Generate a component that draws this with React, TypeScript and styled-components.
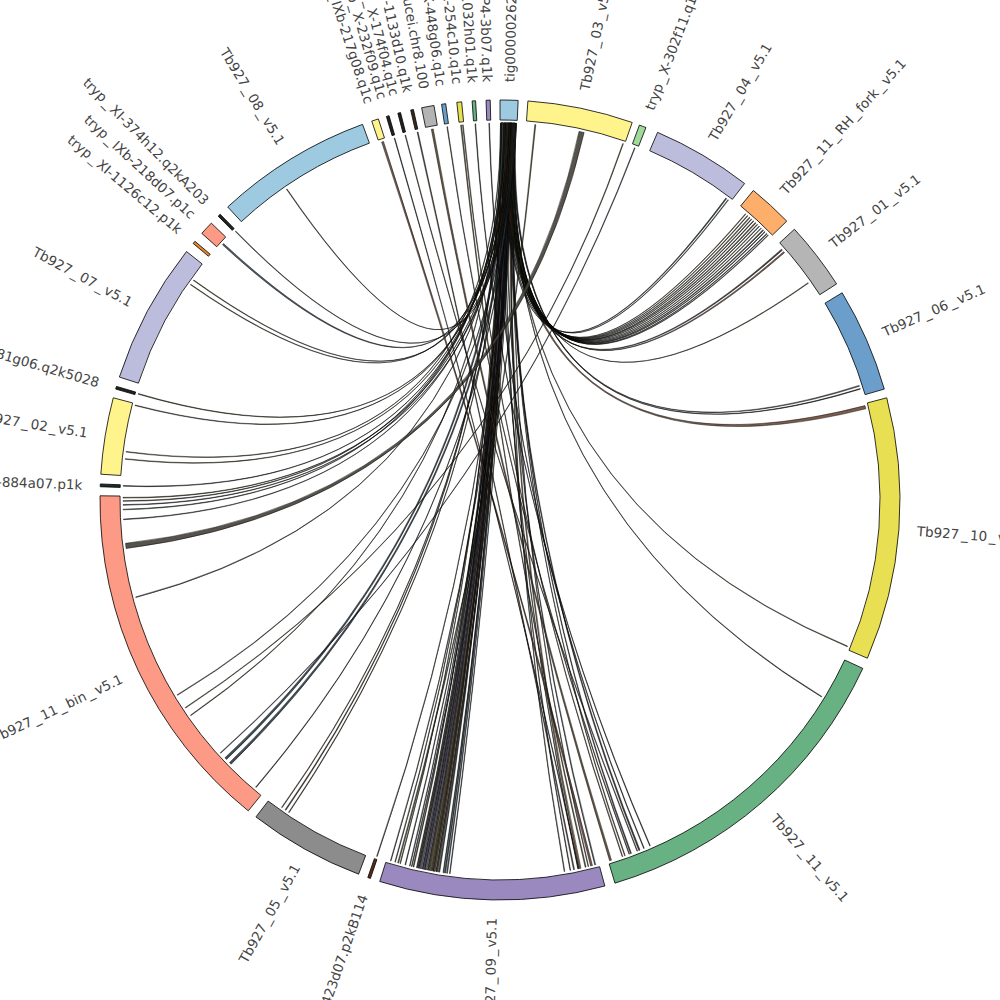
import React from 'react'
import styled, { createGlobalStyle } from 'styled-components'

const GlobalStyle = createGlobalStyle`
  html, body {
    margin: 0;
    padding: 0;
    background: #ffffff;
  }
  body {
    font-family: 'DejaVu Sans', 'Liberation Sans', sans-serif;
  }
`

const Page = styled.div`
  width: 1000px;
  height: 1000px;
  background: #ffffff;
  overflow: hidden;
`

const Plot = styled.svg`
  display: block;
  width: 1000px;
  height: 1000px;
`

const Ideogram = styled.path<{ $fill: string }>`
  fill: ${(p) => p.$fill};
  stroke: #000;
  stroke-width: 0.8;
`

const Ribbon = styled.path<{ $fill: string }>`
  fill: ${(p) => p.$fill};
  fill-opacity: 0.9;
  stroke: #000;
  stroke-width: 0.45;
`

const Label = styled.text`
  font-family: 'DejaVu Sans', 'Liberation Sans', sans-serif;
  font-size: 13.5px;
  fill: #444444;
  dominant-baseline: central;
`

const CX = 500
const CY = 500
const R_OUT = 400
const R_IN = 380
const R_LINK = 377
const R_LABEL = 418

interface Segment {
  name: string
  start: number
  end: number
  color: string
}

const SEGMENTS: Segment[] = [
  { name: 'tig00000262', start: 0, end: 2.6, color: '#9ecae1' },
  { name: 'Tb927_03_v5.1', start: 4.0, end: 19.3, color: '#fff38c' },
  { name: 'tryp_X-302f11.q1c', start: 20.4, end: 21.4, color: '#a1d99b' },
  { name: 'Tb927_04_v5.1', start: 23.2, end: 37.7, color: '#bcbddc' },
  { name: 'Tb927_11_RH_fork_v5.1', start: 39.3, end: 45.8, color: '#fdae6b' },
  { name: 'Tb927_01_v5.1', start: 47.4, end: 57.3, color: '#b5b5b5' },
  { name: 'Tb927_06_v5.1', start: 58.8, end: 73.9, color: '#6b9ecb' },
  { name: 'Tb927_10_v5.1', start: 75.2, end: 113.3, color: '#e8e052' },
  { name: 'Tb927_11_v5.1', start: 114.9, end: 163.3, color: '#68b183' },
  { name: 'Tb927_09_v5.1', start: 164.8, end: 197.5, color: '#9a89bf' },
  { name: 'tryp_X-423d07.p2kB114', start: 198.9, end: 199.3, color: '#5a2a1a' },
  { name: 'Tb927_05_v5.1', start: 200.7, end: 217.6, color: '#8c8c8c' },
  { name: 'Tb927_11_bin_v5.1', start: 219.0, end: 270.6, color: '#fc9a85' },
  { name: 'tryp_XI-884a07.p1k', start: 271.9, end: 272.3, color: '#1e2e30' },
  { name: 'Tb927_02_v5.1', start: 273.7, end: 284.8, color: '#fff38c' },
  { name: 'tryp_XI-881g06.q2k5028', start: 286.1, end: 286.5, color: '#222222' },
  { name: 'Tb927_07_v5.1', start: 287.9, end: 308.4, color: '#bcbddc' },
  { name: 'tryp_XI-1126c12.p1k', start: 309.9, end: 310.3, color: '#e6852e' },
  { name: 'tryp_IXb-218d07.p1c', start: 311.8, end: 313.8, color: '#fc9a85' },
  { name: 'tryp_XI-374h12.q2kA203', start: 315.2, end: 315.6, color: '#222222' },
  { name: 'Tb927_08_v5.1', start: 317.1, end: 339.9, color: '#9ecae1' },
  { name: 'tryp_IXb-217g08.q1c', start: 341.3, end: 342.3, color: '#fff38c' },
  { name: 'tryp_X-232f09.q1c', start: 343.5, end: 343.9, color: '#222222' },
  { name: 'tryp_X-174f04.q1c', start: 345.2, end: 345.6, color: '#222222' },
  { name: 'tryp_XI-1133d10.q1k', start: 347.1, end: 347.5, color: '#3a2a1a' },
  { name: 'Tbrucei.chr8.100', start: 348.7, end: 350.5, color: '#b3b3b3' },
  { name: 'tryp_X-448g06.q1c', start: 351.6, end: 352.2, color: '#6b9ecb' },
  { name: 'tryp_X-254c10.q1c', start: 353.8, end: 354.5, color: '#e8e052' },
  { name: 'tryp_XI-1032h01.q1k', start: 356.0, end: 356.5, color: '#68b183' },
  { name: 'tryp_IXP4-3b07.q1k', start: 358.0, end: 358.6, color: '#9a89bf' },
]

// [source angle, source width, target angle, target width]
type Link = [number, number, number, number]

const TIG_TARGETS: [number, number][] = [
  [188.0, 0.15], [188.6, 0.1], [189.2, 0.2], [189.7, 0.1], [190.1, 0.15], [190.5, 0.25],
  [191.0, 0.1], [191.4, 0.15], [191.8, 0.1], [192.3, 0.2], [192.7, 0.1], [193.2, 0.15],
  [193.8, 0.1], [194.5, 0.1], [195.3, 0.1], [196.1, 0.1], [196.8, 0.1], [189.9, 0.3],
  [190.8, 0.2], [192.0, 0.25], [188.3, 0.2], [191.2, 0.3], [189.5, 0.2], [190.3, 0.15],
  [191.6, 0.2], [192.5, 0.15], [193.5, 0.1], [187.6, 0.1],
  [165.3, 0.15], [166.4, 0.1], [167.6, 0.25], [168.0, 0.1], [169.2, 0.1], [170.1, 0.1],
  [160.6, 0.1], [159.6, 0.15], [158.2, 0.2], [121.4, 0.1],
  [112.8, 0.1], [75.5, 0.5],
  [72.3, 0.15], [72.8, 0.1],
  [48.3, 0.2], [48.8, 0.2], [54.8, 0.1],
  [40.6, 0.1], [41.0, 0.1], [41.4, 0.15], [41.8, 0.1], [42.2, 0.1], [42.6, 0.15],
  [43.0, 0.1], [43.4, 0.1], [43.8, 0.1], [44.2, 0.15], [44.6, 0.1], [45.0, 0.1], [45.3, 0.1],
  [36.8, 0.15], [37.2, 0.1],
  [199.0, 0.1], [214.0, 0.1], [214.6, 0.15], [215.3, 0.1], [220.3, 0.1], [225.5, 0.35],
  [226.5, 0.35], [235.1, 0.1], [238.8, 0.1], [255.0, 0.1], [267.0, 0.1], [268.5, 0.1],
  [269.2, 0.1], [269.8, 0.1], [270.3, 0.1], [272.1, 0.1], [276.2, 0.1], [277.3, 0.1],
  [284.5, 0.1], [286.3, 0.1], [304.8, 0.1], [305.6, 0.1], [312.6, 0.25], [315.4, 0.1],
  [325.5, 0.1],
]

const OTHER_LINKS: Link[] = [
  [12.1, 0.8, 262.6, 0.8],
  [19.0, 0.1, 236.5, 0.1],
  [5.3, 0.15, 195.6, 0.15],
  [20.9, 0.1, 227.8, 0.1],
  [341.7, 0.3, 165.8, 0.3],
  [343.7, 0.1, 167.9, 0.1],
  [345.4, 0.1, 158.6, 0.1],
  [347.3, 0.15, 168.6, 0.15],
  [349.5, 0.3, 162.8, 0.3],
  [351.9, 0.1, 159.9, 0.1],
  [354.0, 0.15, 166.8, 0.15],
  [354.3, 0.1, 161.0, 0.1],
  [356.2, 0.1, 156.5, 0.1],
  [358.3, 0.1, 157.5, 0.1],
]

const PALETTE = [
  '#3d3424', '#4a3b2c', '#2f3d33', '#5a4630', '#3b4a55', '#55552a',
  '#6b4a3a', '#2b2b2b', '#4d5a3a', '#5b4f6b', '#7a5a3a', '#2a3a44',
]

function rng(seed: number) {
  let a = seed
  return () => {
    a |= 0
    a = (a + 0x6d2b79f5) | 0
    let t = Math.imul(a ^ (a >>> 15), 1 | a)
    t = (t + Math.imul(t ^ (t >>> 7), 61 | t)) ^ t
    return ((t ^ (t >>> 14)) >>> 0) / 4294967296
  }
}

const pt = (r: number, deg: number) => {
  const a = (deg * Math.PI) / 180
  return [CX + r * Math.sin(a), CY - r * Math.cos(a)]
}

const f = (n: number) => n.toFixed(2)

function bandPath(a1: number, a2: number) {
  const large = a2 - a1 > 180 ? 1 : 0
  const [ox1, oy1] = pt(R_OUT, a1)
  const [ox2, oy2] = pt(R_OUT, a2)
  const [ix2, iy2] = pt(R_IN, a2)
  const [ix1, iy1] = pt(R_IN, a1)
  return `M${f(ox1)},${f(oy1)} A${R_OUT},${R_OUT} 0 ${large} 1 ${f(ox2)},${f(oy2)} L${f(ix2)},${f(iy2)} A${R_IN},${R_IN} 0 ${large} 0 ${f(ix1)},${f(iy1)} Z`
}

function ribbonPath([a, wa, b, wb]: Link) {
  const [a1x, a1y] = pt(R_LINK, a)
  const [a2x, a2y] = pt(R_LINK, a + wa)
  const [b1x, b1y] = pt(R_LINK, b)
  const [b2x, b2y] = pt(R_LINK, b + wb)
  return `M${f(a1x)},${f(a1y)} Q${CX},${CY} ${f(b2x)},${f(b2y)} L${f(b1x)},${f(b1y)} Q${CX},${CY} ${f(a2x)},${f(a2y)} Z`
}

const rand = rng(927)
const LINKS: { link: Link; color: string }[] = [
  ...TIG_TARGETS.map(([b, w]) => {
    const a = 0.05 + rand() * (2.5 - w)
    return { link: [a, w, b, w] as Link, color: PALETTE[Math.floor(rand() * PALETTE.length)] }
  }),
  ...OTHER_LINKS.map((link, i) => ({
    link,
    color: i === 0 ? '#444038' : PALETTE[Math.floor(rand() * PALETTE.length)],
  })),
]

function SegmentLabel({ name, angle }: { name: string; angle: number }) {
  const [x, y] = pt(R_LABEL, angle)
  const right = angle < 180
  const rot = right ? angle - 90 : angle + 90
  const parts = name.split('_')
  return (
    <Label
      x={f(x)}
      y={f(y)}
      textAnchor={right ? 'start' : 'end'}
      transform={`rotate(${f(rot)} ${f(x)} ${f(y)})`}
    >
      {parts.map((part, i) =>
        i === 0 ? (
          <tspan key={i}>{part}</tspan>
        ) : (
          <React.Fragment key={i}>
            <tspan dx={2}>_</tspan>
            <tspan dx={2}>{part}</tspan>
          </React.Fragment>
        ),
      )}
    </Label>
  )
}

export default function App() {
  return (
    <Page>
      <GlobalStyle />
      <Plot viewBox="0 0 1000 1000">
        <g>
          {LINKS.map(({ link, color }, i) => (
            <Ribbon key={i} d={ribbonPath(link)} $fill={color} />
          ))}
        </g>
        <g>
          {SEGMENTS.map((s) => (
            <Ideogram key={s.name} d={bandPath(s.start, s.end)} $fill={s.color} />
          ))}
        </g>
        <g>
          {SEGMENTS.map((s) => (
            <SegmentLabel key={s.name} name={s.name} angle={(s.start + s.end) / 2} />
          ))}
        </g>
      </Plot>
    </Page>
  )
}
